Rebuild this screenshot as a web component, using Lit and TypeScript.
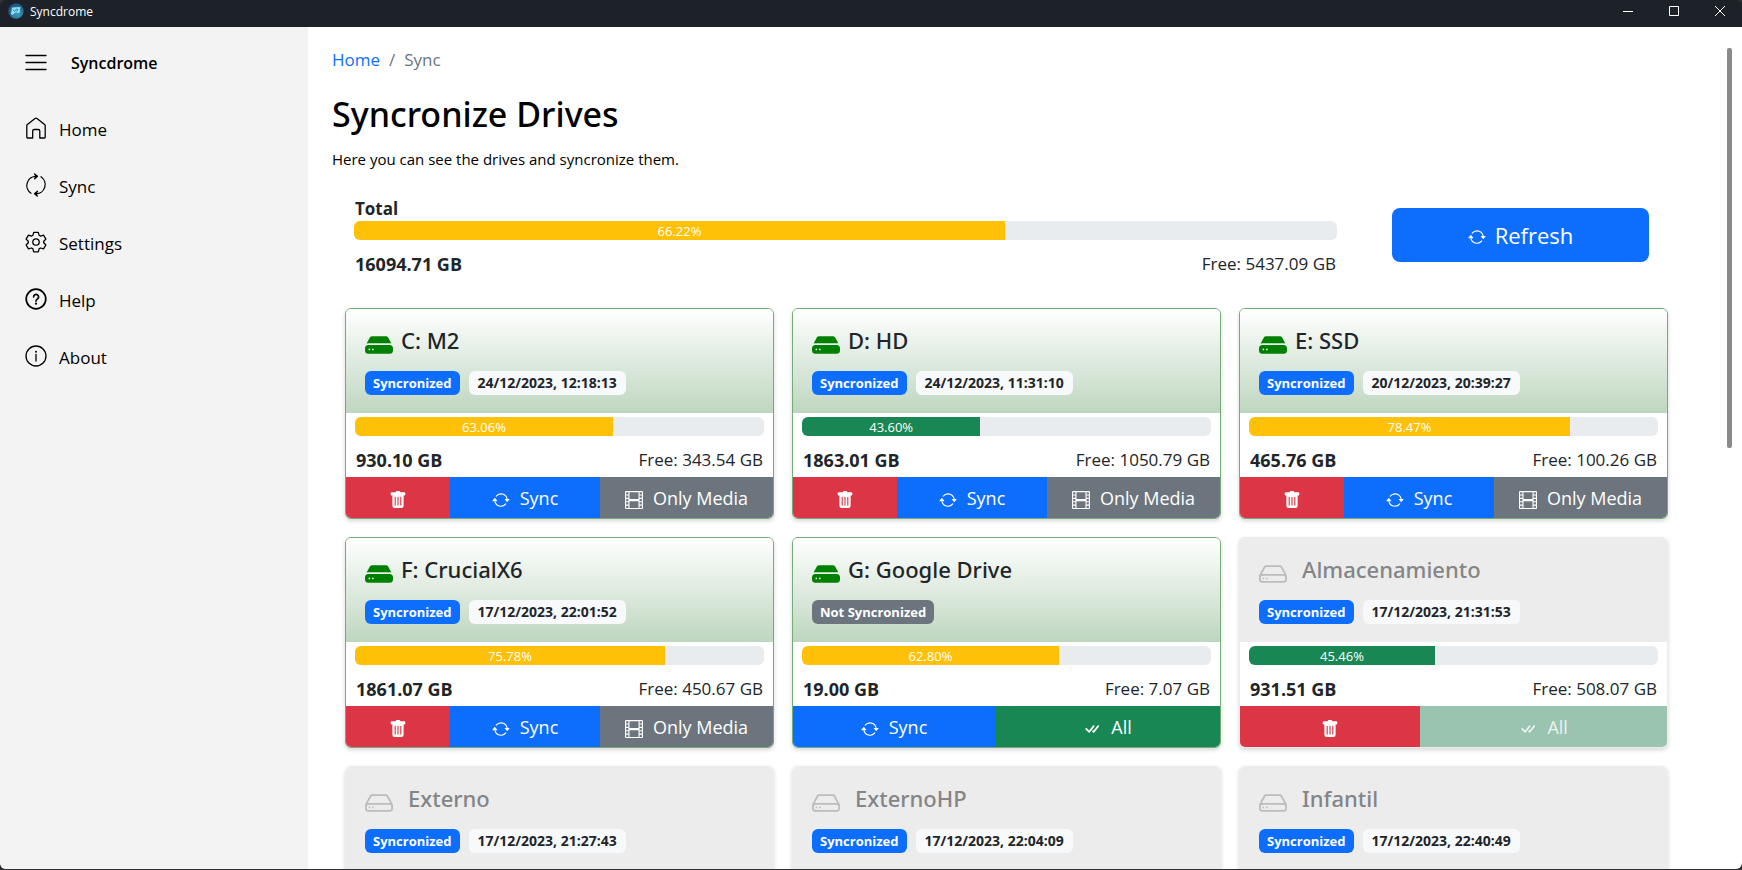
import { LitElement, html, svg, css } from "lit";
import { customElement, property } from "lit/decorators.js";

const icon = (cls: string, box: string, body: unknown) =>
  html`<svg class="icon ${cls}" viewBox=${box} aria-hidden="true">${body}</svg>`;

const B = "0 0 16 16";
const icons = {
  menu: icon("nav", "0 0 22 22", svg`<path d="M1 3.5h20M1 10.5h20M1 17.5h20" class="line"/>`),
  home: icon("nav", "0 0 22 22", svg`<path class="line" d="M1.8 19V8.800a1.600 1.600 0 0 1 .6-1.300L10 1.500a1.600 1.600 0 0 1 2 0l7.600 6a1.600 1.600 0 0 1 .6 1.300V20.200a.8.8 0 0 1-.8.8H14.800V14a1.500 1.500 0 0 0-1.500-1.500H9.200A1.500 1.500 0 0 0 7.700 14V21H2.600a.8.8 0 0 1-.8-.8z"/>`),
  sync: icon("nav", "0 0 22 22", svg`<path class="line" d="M6 19.200A9.200 9.200 0 0 1 11.500 2.300M9.500-.1l3 2.400-2.800 2.500M16 2.800A9.200 9.200 0 0 1 10.500 19.700M12.500 17.200 9.500 19.700l2.800 2.400"/><path d="m9.800 0 2.900 2.300-2.900 2.300zM12.200 17.400 9.300 19.700l2.900 2.300z"/>`),
  settings: icon("nav", "0 0 22 22", svg`<circle class="line" cx="11" cy="11" r="3.200"/><path class="line" d="M8.700 1.300h4.600l.8 3 1.400.8 3-.9 2.400 3.900-2.200 2.200v1.500l2.200 2.200-2.400 3.900-3-.9-1.400.8-.8 3H8.700l-.8-3-1.400-.8-3 .9L1.100 14l2.200-2.200v-1.500L1.100 8.100l2.400-3.900 3 .9 1.400-.8z"/>`),
  help: icon("nav", "0 0 22 22", svg`<circle class="line heavy" cx="11" cy="11" r="9.800"/><path class="line heavy" d="M8.600 8.800a2.500 2.500 0 1 1 3.900 2.100c-1 .7-1.500 1.200-1.500 2.200"/><circle cx="11" cy="15.700" r="1.100"/>`),
  about: icon("nav", "0 0 22 22", svg`<circle class="line" cx="11" cy="11" r="10"/><path class="line" d="M11 9.500v6.500"/><circle cx="11" cy="6.700" r="1"/>`),
  hdd: icon("drive", B, svg`<path d="M4.500 11a.5.5 0 1 0 0-1 .5.5 0 0 0 0 1zM3 10.500a.5.5 0 1 1-1 0 .5.5 0 0 1 1 0z"/><path d="M16 11a2 2 0 0 1-2 2H2a2 2 0 0 1-2-2V9.510c0-.418.105-.83.305-1.197l2.472-4.531A1.500 1.500 0 0 1 4.094 3h7.812a1.500 1.500 0 0 1 1.317.782l2.472 4.530c.2.368.305.78.305 1.198V11zM3.655 4.260 1.592 8.043C1.724 8.014 1.860 8 2 8h12c.14 0 .276.014.408.042L12.345 4.260a.5.5 0 0 0-.439-.26H4.094a.5.5 0 0 0-.44.26zM1 10v1a1 1 0 0 0 1 1h12a1 1 0 0 0 1-1v-1a1 1 0 0 0-1-1H2a1 1 0 0 0-1 1z"/>`),
  hddFill: icon("drive on", B, svg`<path d="M0 10a2 2 0 0 1 2-2h12a2 2 0 0 1 2 2v1a2 2 0 0 1-2 2H2a2 2 0 0 1-2-2v-1zm2.500 1a.5.5 0 1 0 0-1 .5.5 0 0 0 0 1zm2 0a.5.5 0 1 0 0-1 .5.5 0 0 0 0 1zM.91 7.204A2.993 2.993 0 0 1 2 7h12c.384 0 .752.072 1.090.204l-1.867-3.422A1.500 1.500 0 0 0 11.906 3H4.094a1.500 1.500 0 0 0-1.317.782L.91 7.204z"/>`),
  film: icon("small", B, svg`<path d="M0 1a1 1 0 0 1 1-1h14a1 1 0 0 1 1 1v14a1 1 0 0 1-1 1H1a1 1 0 0 1-1-1V1zm4 0v6h8V1H4zm8 8H4v6h8V9zM1 1v2h2V1H1zm2 3H1v2h2V4zM1 7v2h2V7H1zm2 3H1v2h2v-2zm-2 3v2h2v-2H1zM15 1h-2v2h2V1zm-2 3v2h2V4h-2zm2 3h-2v2h2V7zm-2 3v2h2v-2h-2zm2 3h-2v2h2v-2z"/>`),
  repeat: icon("small", B, svg`<path d="M11.534 7h3.932a.25.25 0 0 1 .192.41l-1.966 2.360a.25.25 0 0 1-.384 0l-1.966-2.360a.25.25 0 0 1 .192-.41zm-11 2h3.932a.25.25 0 0 0 .192-.41L2.692 6.230a.25.25 0 0 0-.384 0L.342 8.590A.25.25 0 0 0 .534 9z"/><path d="M8 3c-1.552 0-2.940.707-3.857 1.818a.5.5 0 1 1-.771-.636A6.002 6.002 0 0 1 13.917 7H12.900A5.002 5.002 0 0 0 8 3zM3.100 9a5.002 5.002 0 0 0 8.757 2.182.5.5 0 1 1 .771.636A6.002 6.002 0 0 1 2.083 9H3.100z"/>`),
  trash: icon("small", B, svg`<path d="M2.500 1a1 1 0 0 0-1 1v1a1 1 0 0 0 1 1H3v9a2 2 0 0 0 2 2h6a2 2 0 0 0 2-2V4h.5a1 1 0 0 0 1-1V2a1 1 0 0 0-1-1H10a1 1 0 0 0-1-1H7a1 1 0 0 0-1 1H2.500zm3 4a.5.5 0 0 1 .5.5v7a.5.5 0 0 1-1 0v-7a.5.5 0 0 1 .5-.5zM8 5a.5.5 0 0 1 .5.5v7a.5.5 0 0 1-1 0v-7A.5.5 0 0 1 8 5zm3 .5v7a.5.5 0 0 1-1 0v-7a.5.5 0 0 1 1 0z"/>`),
  checks: icon("small", B, svg`<path d="M8.970 4.970a.75.75 0 0 1 1.070 1.050l-3.990 4.990a.75.75 0 0 1-1.080.02L2.324 8.384a.75.75 0 1 1 1.060-1.060l2.094 2.093L8.950 4.992a.252.252 0 0 1 .02-.022zm-.92 5.140.92.92a.75.75 0 0 0 1.079-.02l3.992-4.990a.75.75 0 1 0-1.091-1.028L9.477 9.417l-.485-.486-.943 1.179z"/>`),
  logo: icon("logo", B, svg`<defs><radialGradient id="g" cx=".6" cy=".7" r=".7"><stop offset="0" stop-color="#3a9fc0"/><stop offset="1" stop-color="#1d4f80"/></radialGradient></defs><circle cx="8" cy="8" r="7.700" fill="url(#g)"/><path d="M4 4.500 12.500 4 11.500 10 7.500 9.500 4.500 12 3 11z" fill="#8fe0f2"/><path d="M5 6.500 6.500 8.500 8.500 6l1.500.5L8.500 8.500" fill="none" stroke="#2f86a6" stroke-width="1"/>`),
  minimize: icon("win", "0 0 10 10", svg`<path class="thin" d="M0 5.500h10"/>`),
  maximize: icon("win", "0 0 10 10", svg`<path class="thin" d="M.5.5h9v9h-9z"/>`),
  close: icon("win", "0 0 10 10", svg`<path class="thin" d="m0 0 10 10M10 0 0 10"/>`),
};

const iconStyles = css`
  .icon { display: block; flex: none; fill: currentColor; overflow: visible; }
  .nav { width: 22px; height: 22px; }
  .drive { width: 28px; height: 28px; }
  .small { width: 18px; height: 18px; }
  .logo { width: 16px; height: 16px; }
  .win { width: 10px; height: 10px; }
  .line { fill: none; stroke: currentColor; stroke-width: 1.3; stroke-linejoin: round; stroke-linecap: round; }
  .heavy { stroke-width: 1.7; }
  .thin { fill: none; stroke: currentColor; stroke-width: 1; }
  .on { color: #008000; }
`;

interface Drive {
  name: string;
  online: boolean;
  synced?: string;
  used: number;
  size: string;
  free: string;
}

const drives: Drive[] = [
  { name: "C: M2", online: true, synced: "24/12/2023, 12:18:13", used: 63.06, size: "930.10", free: "343.54" },
  { name: "D: HD", online: true, synced: "24/12/2023, 11:31:10", used: 43.6, size: "1863.01", free: "1050.79" },
  { name: "E: SSD", online: true, synced: "20/12/2023, 20:39:27", used: 78.47, size: "465.76", free: "100.26" },
  { name: "F: CrucialX6", online: true, synced: "17/12/2023, 22:01:52", used: 75.78, size: "1861.07", free: "450.67" },
  { name: "G: Google Drive", online: true, used: 62.8, size: "19.00", free: "7.07" },
  { name: "Almacenamiento", online: false, synced: "17/12/2023, 21:31:53", used: 45.46, size: "931.51", free: "508.07" },
  { name: "Externo", online: false, synced: "17/12/2023, 21:27:43", used: 52.1, size: "931.51", free: "446.19" },
  { name: "ExternoHP", online: false, synced: "17/12/2023, 22:04:09", used: 70.4, size: "465.76", free: "137.86" },
  { name: "Infantil", online: false, synced: "17/12/2023, 22:40:49", used: 48.3, size: "465.76", free: "240.80" },
];

@customElement("usage-bar")
class UsageBar extends LitElement {
  @property({ type: Number }) value = 0;
  @property() size = "";
  @property() free = "";

  static styles = css`
    :host { display: block; }
    .track { height: 19px; border-radius: 6px; background: #e9ecef; overflow: hidden; }
    .fill { height: 100%; background: #198754; color: #fff; font-size: 13px; line-height: 20px; text-align: center; }
    .warn { background: #ffc107; }
    .figures { display: flex; justify-content: space-between; padding: 0 1px; margin-top: 12px; font-size: 17px; line-height: 24px; }
    .size { font-size: 18px; font-weight: 700; }
  `;

  render() {
    return html`
      <div class="track" role="progressbar" aria-valuenow=${this.value}>
        <div class="fill ${this.value > 60 ? "warn" : ""}" style="width:${this.value}%">${this.value.toFixed(2)}%</div>
      </div>
      <div class="figures">
        <span class="size">${this.size} GB</span>
        <span>Free: ${this.free} GB</span>
      </div>
    `;
  }
}

@customElement("drive-card")
class DriveCard extends LitElement {
  @property({ attribute: false }) drive!: Drive;

  static styles = [iconStyles, css`
    :host { display: block; min-width: 0; }
    .card { border: 1px solid #75ab79; border-radius: 6px; background: #fff; overflow: hidden; box-shadow: 0 2px 4px rgba(0, 0, 0, 0.16); }
    .offline { border-color: #ececec; }
    .head { height: 104px; box-sizing: border-box; padding: 15px 19px; background: linear-gradient(#fff, #bed6bf); }
    .offline .head { background: #ececec; }
    .name { display: flex; align-items: flex-start; gap: 8px; margin: 0; font-family: "Noto Sans", sans-serif; font-size: 22px; font-weight: 500; line-height: 32px; }
    .name .icon { margin-top: 7px; }
    .offline .name { gap: 15px; color: #838587; }
    .offline .drive { color: #bcbcbc; }
    .badges { display: flex; gap: 9px; margin-top: 12px; }
    .badge { padding: 0 8px; border-radius: 6px; font-size: 13px; font-weight: 700; line-height: 24px; }
    .date { padding: 0 9px; background: #f8f9fa; font-size: 14px; }
    .done { background: #0d6efd; color: #fff; }
    .pending { background: #6c757d; color: #fff; }
    .usage { padding: 4px 9px 5px; }
    .actions { display: flex; height: 41px; }
    .btn { display: flex; align-items: center; justify-content: center; gap: 10px; border: 0; padding: 0; color: #fff; font: inherit; font-size: 18px; line-height: 24px; }
    .btn .icon { margin-top: 5px; }
    .delete { flex: 104 1 0; background: #dc3545; }
    .sync { flex: 150 1 0; background: #0d6efd; }
    .media { flex: 173 1 0; background: #6c757d; }
    .all { flex: 167 1 0; background: #198754; }
    .offline .delete { flex-grow: 122; }
    .btn:disabled { background: #9ac4b0; color: #eef2f0; }
  `];

  render() {
    const d = this.drive;
    return html`
      <article class="card ${d.online ? "" : "offline"}">
        <header class="head">
          <h2 class="name">${d.online ? icons.hddFill : icons.hdd}${d.name}</h2>
          <div class="badges">
            ${d.synced
              ? html`<span class="badge done">Syncronized</span><span class="badge date">${d.synced}</span>`
              : html`<span class="badge pending">Not Syncronized</span>`}
          </div>
        </header>
        <div class="usage">
          <usage-bar .value=${d.used} .size=${d.size} .free=${d.free}></usage-bar>
        </div>
        <div class="actions">
          ${d.synced ? html`<button class="btn delete" aria-label="Delete">${icons.trash}</button>` : ""}
          ${d.online ? html`<button class="btn sync">${icons.repeat}Sync</button>` : ""}
          ${d.online && d.synced
            ? html`<button class="btn media">${icons.film}Only Media</button>`
            : html`<button class="btn all" ?disabled=${!d.online}>${icons.checks}All</button>`}
        </div>
      </article>
    `;
  }
}

@customElement("app-root")
class AppRoot extends LitElement {
  static styles = [iconStyles, css`
    :host { display: block; height: 100vh; background: #2d2f33; color: #212529; font-family: "Open Sans", "Noto Sans", sans-serif; font-size: 16px; }
    .window { display: flex; flex-direction: column; height: 100%; box-sizing: border-box; padding-bottom: 1px; border-radius: 6px; overflow: hidden; }
    .titlebar { display: flex; align-items: center; height: 27px; flex: none; padding: 0 17px 5px 8px; box-sizing: border-box; background: #1c2228; color: #fff; font-size: 12px; gap: 6px; }
    .controls { display: flex; gap: 36px; margin-left: auto; }
    .control { border: 0; padding: 0; background: none; color: #fff; }
    .body { display: flex; flex: 1; min-height: 0; background: #fff; border-radius: 0 0 6px 6px; overflow: hidden; }
    .sidebar { width: 308px; flex: none; box-sizing: border-box; padding: 24px; background: #f3f3f3; color: #000; }
    .brand { display: flex; align-items: center; gap: 24px; padding-left: 1px; font-size: 16px; font-weight: 600; line-height: 24px; }
    .toggle { border: 0; padding: 0; background: none; color: #000; }
    .links { display: flex; flex-direction: column; gap: 32px; margin: 42px 0 0; padding: 0 0 0 1px; list-style: none; }
    .link { display: flex; align-items: center; gap: 12px; color: #000; text-decoration: none; font-size: 17px; line-height: 24px; }
    .link .icon { margin-bottom: 3px; }
    .main { flex: 1; min-width: 0; overflow-y: auto; scrollbar-width: none; padding: 20px 59px 0 24px; }
    .crumbs { display: flex; gap: 9px; font-size: 17px; line-height: 26px; color: #6c757d; }
    .crumb { color: #0d6efd; text-decoration: none; }
    .title { margin: 18px 0 0; color: #000; font-family: "Noto Sans", sans-serif; font-size: 34px; font-weight: 500; line-height: 46px; }
    .lead { margin: 10px 0 0; color: #000; font-size: 15px; line-height: 24px; }
    .overview { display: flex; align-items: flex-start; gap: 55px; margin: 26px 19px 0 22px; }
    .total { flex: 983 1 0; }
    .label { padding-left: 1px; font-size: 17px; font-weight: 700; line-height: 24px; }
    .refresh { flex: 257 1 0; display: flex; align-items: center; justify-content: center; gap: 9px; height: 54px; margin-top: 11px; padding: 0; border: 0; border-radius: 8px; background: #0d6efd; color: #fff; font: inherit; font-size: 22px; }
    .refresh .icon { margin-top: 4px; }
    .drives { display: grid; grid-template-columns: repeat(3, minmax(0, 1fr)); gap: 18px; margin: 32px 0 18px 13px; }
    .rail { width: 15px; flex: none; padding-top: 21px; }
    .thumb { width: 5px; height: 400px; border-radius: 2px; background: #8a8a8a; }
  `];

  render() {
    const links: [unknown, string][] = [
      [icons.home, "Home"], [icons.sync, "Sync"], [icons.settings, "Settings"], [icons.help, "Help"], [icons.about, "About"],
    ];
    return html`
      <div class="window">
        <header class="titlebar">
          ${icons.logo}<span>Syncdrome</span>
          <div class="controls">
            <button class="control" aria-label="Minimize">${icons.minimize}</button>
            <button class="control" aria-label="Maximize">${icons.maximize}</button>
            <button class="control" aria-label="Close">${icons.close}</button>
          </div>
        </header>
        <div class="body">
          <nav class="sidebar">
            <div class="brand"><button class="toggle" aria-label="Toggle menu">${icons.menu}</button>Syncdrome</div>
            <ul class="links">
              ${links.map(([i, text]) => html`<li><a class="link" href="#">${i}${text}</a></li>`)}
            </ul>
          </nav>
          <main class="main">
            <nav class="crumbs"><a class="crumb" href="#">Home</a><span>/</span><span>Sync</span></nav>
            <h1 class="title">Syncronize Drives</h1>
            <p class="lead">Here you can see the drives and syncronize them.</p>
            <section class="overview">
              <div class="total">
                <div class="label">Total</div>
                <usage-bar .value=${66.22} size="16094.71" free="5437.09"></usage-bar>
              </div>
              <button class="refresh">${icons.repeat}Refresh</button>
            </section>
            <section class="drives">${drives.map((d) => html`<drive-card .drive=${d}></drive-card>`)}</section>
          </main>
          <div class="rail"><div class="thumb"></div></div>
        </div>
      </div>
    `;
  }
}
